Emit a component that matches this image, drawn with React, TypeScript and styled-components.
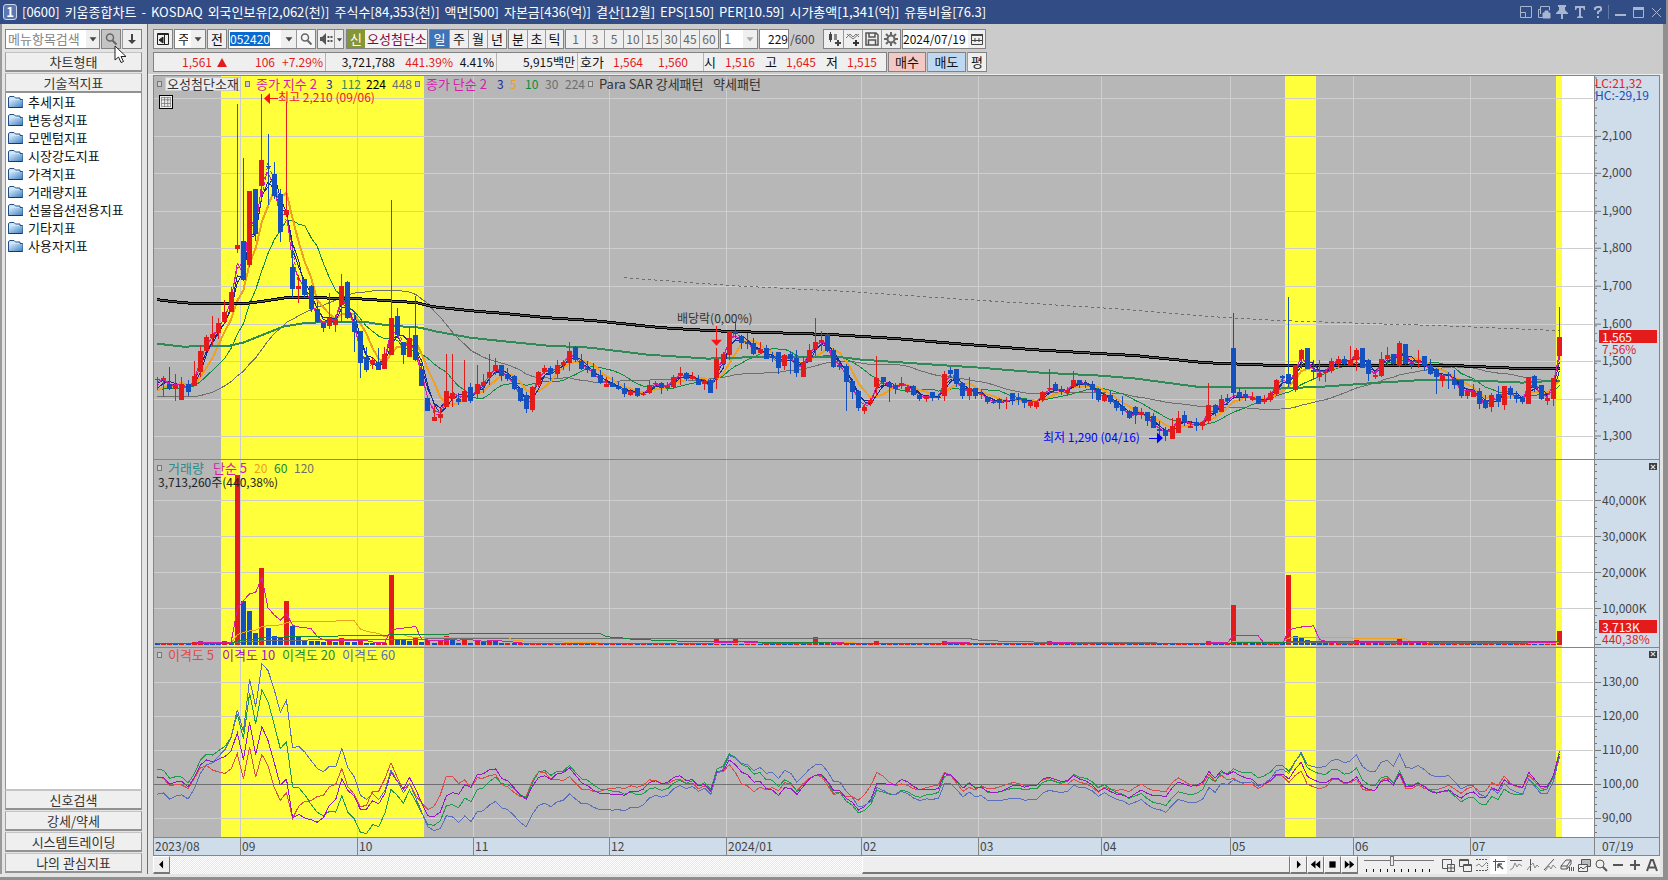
import React, { Fragment } from "react";
import styled, { createGlobalStyle, css } from "styled-components";

const RED = "#e31b1b";
const BLUE = "#1450be";
const MAGENTA = "#d61cab";
const NAVY = "#1a2b94";
const ORANGE = "#f0a020";
const GREEN = "#0f8a3c";
const GRAY = "#6e6e6e";
const TEAL = "#2e8b57";

/* ---------- data ---------- */

/* One candle per trading day: direction, high, body top, body bottom, low (plot units, 0.3756 units per won). */
const CANDLES = `
+377,379,380,390 +376,378,380,397 -367,384,389,390 +374,385,389,401 +377,384,400,400 -380,384,392,396
+361,376,386,386 +345,351,372,377 +335,337,351,351 +316,334,338,346 +318,323,333,339 +300,312,322,323
+287,292,312,312 +104,245,249,253 -158,241,280,281 +191,191,265,267 -189,189,234,241 +94,160,186,200
-134,166,167,205 -162,174,196,199 -189,194,232,242 +102,210,215,217 -250,267,289,298 +275,286,289,303
-279,279,295,297 -285,286,309,312 -302,309,322,323 -323,323,328,332 +293,318,326,329 +315,319,325,332
+274,286,305,322 -281,282,318,319 -311,322,332,352 -331,331,363,378 -347,357,370,372 +358,360,364,369
-348,362,370,370 +347,354,369,369 +200,318,355,355 -308,316,335,337 -342,342,355,364 +327,338,357,357
-296,335,360,361 -363,369,386,386 -398,398,411,411 +405,417,421,421 +408,414,418,423 +354,391,407,407
+354,393,399,407 -393,399,402,405 +360,391,402,402 -383,387,401,403 +365,384,394,398 +374,382,386,393
+354,372,377,385 +358,365,371,375 -365,365,376,381 -368,374,379,381 -375,376,389,390 -388,388,401,402
-392,395,409,413 +386,387,410,412 +371,372,385,387 +365,368,372,374 -366,368,374,381 +360,365,374,378
+360,362,365,370 +342,351,363,371 -346,347,360,362 -354,361,369,370 -361,368,370,373 -363,369,377,377
-370,375,383,384 +377,384,387,387 -377,383,387,387 -382,386,389,390 -383,388,394,397 +389,391,395,396
-388,388,396,397 +393,394,395,396 +380,385,393,394 +381,383,384,387 -382,383,388,394 +382,386,388,391
+375,377,387,389 +367,373,375,385 -372,373,379,381 +372,376,379,380 -375,379,385,385 +380,381,384,390
-379,380,393,393 +348,359,378,389 +352,354,364,367 +331,331,355,360 -322,331,334,338 -336,336,343,349
-333,342,344,349 -338,343,354,355 +342,349,353,354 -345,348,359,359 -352,356,358,362 -352,352,368,374
+354,355,366,370 -351,354,359,374 -350,358,373,377 +356,362,377,377 +344,350,362,362 +318,342,349,356
+331,340,342,351 -333,335,351,352 -348,350,367,368 -361,365,367,370 -364,366,382,411 -380,381,392,399
-390,391,408,411 +405,407,411,414 +398,400,403,406 +356,378,387,396 -377,377,382,385 -382,383,387,402
-383,385,389,394 +377,383,386,389 +385,387,392,393 -385,386,395,396 -394,395,399,401 +396,397,399,402
-392,392,398,401 -394,397,398,400 +371,374,396,401 -367,370,374,378 -369,369,384,387 -382,383,396,399
+377,388,396,400 -388,388,396,399 +390,394,395,399 -396,397,402,404 -399,402,403,404 -398,399,403,409
+397,401,402,409 -393,393,399,405 -393,398,399,405 -399,399,403,408 +401,402,406,408 +401,402,407,409
+391,392,400,402 +369,388,389,392 -382,384,390,391 -386,389,392,395 +387,390,393,395 +371,380,387,387
-380,380,384,388 -380,383,385,388 -381,384,390,399 -388,389,400,402 +393,395,401,402 -391,395,402,404
-399,401,408,411 -396,406,411,415 -410,411,418,419 -406,407,415,424 +408,412,415,419 -412,412,421,426
-413,416,428,428 -421,429,431,435 -427,430,436,441 +418,426,439,439 +411,418,433,433 -411,415,422,426
+421,426,428,428 -418,422,426,431 +421,422,426,430 +383,405,421,424 -404,405,413,416 +395,399,412,412
-394,398,401,405 -313,348,393,397 -388,392,397,401 -390,394,398,401 +392,397,400,401 -396,396,404,404
+395,400,402,404 +391,393,400,402 +379,380,394,396 -375,376,378,384 -297,374,384,387 +365,366,390,392
+349,350,359,369 -348,348,369,369 -360,370,372,379 +360,373,377,381 +369,371,373,382 +358,361,371,373
+356,359,364,367 -356,359,364,366 +346,360,365,366 +348,350,360,371 -348,348,368,368 -359,360,374,381
+372,375,377,379 +352,359,376,377 +347,355,359,365 -354,354,364,366 +341,343,366,367 -344,344,364,366
-361,363,365,369 +350,360,362,368 -356,356,366,371 -359,365,374,375 -368,369,377,394 +375,376,381,387
-372,374,375,389 -370,379,385,389 -380,380,396,398 +388,391,396,399 +384,391,397,397 -388,391,404,409
-395,400,408,409 +393,395,407,412 -386,394,402,407 +386,386,405,410 -386,388,395,399 -391,395,399,403
-396,398,402,404 +377,377,404,404 -375,376,388,392 -385,385,399,400 +396,398,401,405 +378,378,399,406
+307,337,356,360`
  .trim()
  .split(/\s+/)
  .map((token) => {
    const [high, top, bottom, low] = token.slice(1).split(",").map(Number);
    const up = token[0] === "+";
    return { up, high, top, bottom, low, close: up ? top : bottom };
  });

/* Volume bar heights of the days that stand out; the other days stay flat. */
const BUSY_DAYS: Record<number, number> = {
  6: 3, 7: 4, 8: 3, 11: 4, 12: 2, 13: 170, 14: 44, 15: 34, 16: 12, 17: 77, 18: 17, 19: 9, 20: 8, 21: 44,
  22: 19, 23: 9, 24: 5, 25: 4, 26: 4, 27: 3, 28: 5, 29: 3, 30: 7, 31: 3, 32: 3, 33: 5, 34: 2, 38: 70, 39: 6,
  40: 5, 41: 4, 42: 7, 43: 3, 44: 5, 46: 4, 47: 9, 48: 7, 49: 2, 50: 5, 51: 2, 52: 5, 53: 3, 54: 5, 55: 5,
  91: 6, 94: 6, 101: 3, 107: 8, 117: 4, 128: 4, 145: 4, 171: 4, 175: 40, 184: 70, 185: 9, 186: 7, 187: 5,
  188: 3, 195: 5, 202: 6, 213: 2, 223: 4, 227: 4, 228: 14,
};
const VOLUMES = CANDLES.map((_, i) => BUSY_DAYS[i] ?? 1 + ((i * 7) % 5) / 10);

const PLOT = { left: 154, width: 1440 };
const dayX = (i: number) => 157.3 + i * 6.15;
const priceOf = (y: number) => 1300 + (436.3 - y) / 0.3756;

type Point = [number, number];

const CLOSES = CANDLES.map((c) => c.close);
const HISTORY = [
  ...Array(30).fill(327), ...Array(10).fill(385), ...Array(10).fill(416), ...Array(5).fill(389), ...Array(5).fill(394),
] as number[];

const average = (values: number[], before: number[], span: number) => {
  const all = [...before, ...values];
  return values.map((_, i) => {
    const end = before.length + i + 1;
    const part = all.slice(Math.max(0, end - span), end);
    return part.reduce((a, b) => a + b, 0) / part.length;
  });
};
const exponential = (values: number[], span: number) => {
  const k = 2 / (span + 1);
  let last = 388;
  return values.map((v) => (last = v * k + last * (1 - k)));
};
const path = (points: Point[]) => points.map(([x, y], i) => `${i ? "L" : "M"}${x.toFixed(1)} ${y.toFixed(1)}`).join("");
const series = (values: number[]) => path(values.map((v, i) => [dayX(i), v]));

const EMA_224: Point[] = [
  [157, 300], [183, 303], [200, 304], [243, 304], [260, 302], [286, 298], [313, 298], [357, 299], [417, 303],
  [433, 307], [470, 311], [507, 314], [547, 318], [594, 321], [661, 328], [711, 331], [740, 332], [772, 333],
  [833, 335], [897, 339], [944, 343], [1033, 350], [1100, 354], [1136, 356], [1204, 363], [1252, 365],
  [1279, 366], [1399, 366], [1455, 366], [1522, 369], [1560, 369],
];
const EMA_112: Point[] = [
  [157, 344], [183, 347], [230, 346], [243, 343], [263, 335], [283, 327], [307, 323], [363, 322], [390, 326],
  [420, 328], [437, 332], [470, 338], [507, 342], [547, 346], [590, 348], [647, 355], [708, 359], [769, 357],
  [836, 357], [861, 360], [919, 364], [979, 368], [1040, 373], [1100, 376], [1136, 379], [1196, 387],
  [1237, 388], [1279, 389], [1324, 387], [1380, 383], [1429, 380], [1477, 381], [1522, 383], [1560, 381],
];
const SMA_224: Point[] = [
  [624, 278], [733, 286], [851, 292], [969, 300], [1100, 308], [1140, 311], [1226, 318], [1282, 321],
  [1372, 324], [1440, 326], [1560, 331],
];

const MONTHS: { x: number; label: string }[] = [
  { x: 240, label: "09" }, { x: 357, label: "10" }, { x: 473, label: "11" }, { x: 609, label: "12" },
  { x: 726, label: "2024/01" }, { x: 861, label: "02" }, { x: 978, label: "03" }, { x: 1101, label: "04" },
  { x: 1230, label: "05" }, { x: 1353, label: "06" }, { x: 1470, label: "07" },
];

const BANDS = [
  { x: 221, width: 203 },
  { x: 1285, width: 31 },
  { x: 1556, width: 6 },
];

/* ---------- shared ---------- */

const GlobalStyle = createGlobalStyle`
  * { box-sizing: border-box; }
  body { margin: 0; background: #8f8f8f; }
  body, button, input, select {
    font-family: "Noto Sans CJK KR", sans-serif;
    font-size: 13px;
    line-height: 14px;
    color: #222;
  }
  button, input, select { margin: 0; padding: 0; border-radius: 0; outline: none; }
  h1, p, ul { margin: 0; padding: 0; font-weight: normal; list-style: none; }
`;

const Window = styled.div`
  display: flex;
  flex-direction: column;
  min-width: 1200px;
  min-height: 100vh;
  background: #e4e4e4;
  border-right: 5px solid #8f908f;
`;

const TitleBar = styled.header`
  display: flex;
  align-items: center;
  flex: 0 0 24px;
  gap: 5px;
  padding: 0 3px;
  margin-right: -3px;
  background: #324d85;
  color: #fff;
`;
const WindowNumber = styled.span`
  width: 14px;
  height: 16px;
  border: 1px solid #cfd8ea;
  border-radius: 3px;
  background: #5b78b0;
  font-weight: bold;
  text-align: center;
`;
const Title = styled.h1`
  display: flex;
  flex: 1;
  gap: 5px;
  font-size: 13px;
  line-height: 16px;
  white-space: nowrap;
`;
const TitleTools = styled.div`
  display: flex;
  align-items: center;
  gap: 3px;
`;
const TitleButton = styled.button`
  display: flex;
  width: 15px;
  height: 16px;
  align-items: center;
  justify-content: center;
  border: 0;
  background: none;
  color: #a9b6d0;
`;
const TitleDivider = styled.i`
  width: 1px;
  height: 14px;
  background: #6378a0;
`;

const Body = styled.div`
  display: flex;
  flex: 1;
  padding-bottom: 3px;
  border-bottom: 3px solid #8f908f;
`;

/* ---------- sidebar ---------- */

const Sidebar = styled.aside`
  display: flex;
  flex-direction: column;
  flex: 0 0 148px;
  padding: 5px 5px 0 3px;
  border-left: 2px solid #9a9a9a;
  border-right: 1px solid #6e6e6e;
  background: #e4e4e4;
`;
const SearchRow = styled.form`
  display: flex;
  gap: 1px;
  height: 20px;
  margin-bottom: 3px;
`;
const Combo = styled.div<{ $width: number }>`
  display: flex;
  width: ${(p) => p.$width}px;
  height: 20px;
  border: 1px solid #828282;
  background: #fff;
`;
const TextInput = styled.input<{ $align?: string; $small?: boolean }>`
  flex: 1;
  min-width: 0;
  border: 0;
  padding: 0 ${(p) => (p.$small ? 0 : 2)}px;
  background: none;
  color: #111;
  font-size: ${(p) => (p.$small ? 12 : 13)}px;
  text-align: ${(p) => p.$align ?? "left"};
  &::placeholder { color: #858585; }
`;
const NativeSelect = styled.select<{ $off?: boolean }>`
  appearance: none;
  flex: 1;
  min-width: 0;
  border: 0;
  padding: 0 3px;
  background: none;
  color: ${(p) => (p.$off ? "#777" : "#111")};
`;
const SectionButton = styled.button`
  height: 20px;
  flex-shrink: 0;
  border: 1px solid;
  border-bottom-width: 2px;
  border-color: #c4c4c4 #929292 #929292 #a0a0a0;
  background: #efefef;
  color: #333;
  margin-bottom: 1px;
`;
const FolderList = styled.ul`
  flex: 1;
  margin-top: -1px;
  border: 1px solid #929292;
  border-top: 0;
  border-bottom-color: #c4c4c4;
  background: #fff;
`;
const FolderItem = styled.li`
  display: flex;
  align-items: center;
  gap: 5px;
  height: 18px;
  padding-left: 2px;
  color: #111;
`;

/* ---------- toolbar ---------- */

const Main = styled.main`
  display: flex;
  flex-direction: column;
  flex: 1;
  min-width: 0;
`;
const Toolbars = styled.div`
  display: flex;
  flex-direction: column;
  gap: 3px;
  padding: 5px 0 0 5px;
  height: 51px;
  background: #cbcbcb;
  border-bottom: 1px solid #eee;
`;
const ToolRow = styled.div`
  display: flex;
  height: 20px;
  gap: 1px;
`;
const Group = styled.div<{ $after?: number }>`
  display: flex;
  height: 20px;
  margin-right: ${(p) => p.$after ?? 0}px;
  border: 1px solid #828282;
  background: #fff;
`;
const ToolButton = styled.button<{ $width: number; $on?: boolean; $off?: boolean; $boxed?: boolean; $tone?: string; $divided?: boolean }>`
  display: flex;
  flex: 0 0 ${(p) => p.$width}px;
  min-width: 0;
  align-items: center;
  justify-content: center;
  border: ${(p) => (p.$boxed ? "1px solid #828282" : "0")};
  ${(p) => p.$divided && css`& + & { border-left: 1px solid #9a9a9a; }`}
  background: ${(p) => p.$tone ?? (p.$on ? "#3f74b8" : "#efefef")};
  color: ${(p) => (p.$on ? "#fff" : p.$off ? "#666" : "#111")};
  font-size: ${(p) => (p.$off ? 12 : 13)}px;
  svg { flex-shrink: 0; }
`;
const StockName = styled.span`
  display: block;
  width: 62px;
  padding-left: 2px;
  overflow: hidden;
  background: #f4f4f4;
  color: #7d0a3c;
  line-height: 17px;
  white-space: nowrap;
`;
const NewBadge = styled.span`
  width: 18px;
  background: #859636;
  color: #fff;
  line-height: 17px;
  text-align: center;
`;
const CodeInput = styled(TextInput)`
  flex: 0 0 51px;
  margin: 2px 0 2px 1px;
  background: linear-gradient(#0a6ad0, #0a6ad0) 0 0 / 40px 100% no-repeat;
  color: #fff;
`;
const Total = styled.span`
  width: 32px;
  color: #444;
  font-size: 12px;
  line-height: 20px;
`;
const QuoteBox = styled.div`
  display: flex;
  width: 734px;
  height: 20px;
  border: 1px solid #828282;
  background: #efefef;
`;
const Quote = styled.span<{ $width: number; $color?: string; $end?: boolean; $align?: string; $label?: boolean }>`
  flex: 0 0 ${(p) => p.$width}px;
  padding-right: 2px;
  border-right: ${(p) => (p.$end ? "1px solid #b4b4b4" : "0")};
  color: ${(p) => p.$color ?? "#111"};
  font-size: ${(p) => (p.$label ? 13 : 12)}px;
  line-height: 18px;
  text-align: ${(p) => p.$align ?? "right"};
  white-space: nowrap;
`;
const RiseMark = styled.i`
  display: inline-block;
  margin: 0 0 0 5px;
  border: 5px solid transparent;
  border-top: 0;
  border-bottom: 9px solid ${RED};
`;

/* ---------- chart ---------- */

const ChartFrame = styled.section`
  display: flex;
  flex-direction: column;
  flex: 1;
  margin: 0 3px 0 5px;
  border: 1px solid #858585;
`;
const Pane = styled.div<{ $grow: number }>`
  display: flex;
  flex: ${(p) => p.$grow} 1 0;
  border-bottom: 1px solid #858585;
`;
const Plot = styled.div`
  position: relative;
  flex: 1;
  min-width: 0;
  background: linear-gradient(to right, #b7b7b7 97.8%, #fff 97.8%);
`;
const Canvas = styled.svg`
  position: absolute;
  inset: 0;
  width: 100%;
  height: 100%;
  path { fill: none; vector-effect: non-scaling-stroke; shape-rendering: crispEdges; }
`;
const Scale = styled.div`
  position: relative;
  flex: 0 0 65px;
  border-left: 1px solid #858585;
  background: #cfdcea;
`;
const ScaleSvg = styled.svg`
  position: absolute;
  left: 0;
  top: 0;
  width: 8px;
  height: 100%;
`;
const SCALE_COLORS = { red: RED, blue: BLUE, plain: "#444" };
const ScaleLabel = styled.span<{ $tone?: "red" | "blue"; $wide?: boolean }>`
  position: absolute;
  left: ${(p) => (p.$wide ? 0 : 7)}px;
  margin-top: -7px;
  color: ${(p) => SCALE_COLORS[p.$tone ?? "plain"]};
  font-size: 12px;
  line-height: 12px;
`;
const ScaleFlag = styled.span`
  position: absolute;
  left: 4px;
  right: 2px;
  margin-top: -8px;
  padding-left: 3px;
  background: ${RED};
  color: #fff;
  font-size: 12px;
  line-height: 13px;
`;
const CloseButton = styled.button`
  position: absolute;
  right: 2px;
  top: 3px;
  width: 8px;
  height: 7px;
  border: 0;
  background: #3c3c3c;
  display: flex;
  align-items: center;
  justify-content: center;
`;
const Legend = styled.p`
  position: relative;
  display: flex;
  align-items: center;
  height: 15px;
  padding-left: 3px;
  white-space: pre;
`;
const LegendItem = styled.span<{ $color?: string; $width?: number; $boxed?: boolean; $number?: boolean }>`
  width: ${(p) => (p.$width ? `${p.$width}px` : "auto")};
  flex-shrink: 0;
  color: ${(p) => p.$color ?? "#333"};
  font-size: ${(p) => (p.$number ? 12 : 13)}px;
  ${(p) => p.$boxed && css`background: #ececec; border: 1px solid #ccc; text-align: center; line-height: 12px; margin-right: 4px;`}
`;
const Bullet = styled.i<{ $gap?: number }>`
  width: 5px;
  height: 6px;
  margin-right: ${(p) => p.$gap ?? 6}px;
  flex-shrink: 0;
  border: 1px solid #777;
  background: #ccc;
`;
const Note = styled.span<{ $color: string }>`
  position: absolute;
  display: flex;
  align-items: center;
  height: 14px;
  margin-top: -7px;
  color: ${(p) => p.$color};
  font-size: 12px;
  white-space: nowrap;
`;
const GridButton = styled.button`
  position: absolute;
  left: 5px;
  top: 19px;
  width: 14px;
  height: 14px;
  display: flex;
  align-items: center;
  justify-content: center;
  border: 1px solid #000;
  background: #eee;
`;
const DateAxis = styled.div`
  display: flex;
  flex: 0 0 17px;
  background: #cfdcea;
  color: #444;
  font-size: 12px;
`;
const DateTrack = styled.div`
  position: relative;
  flex: 1;
`;
const DateLabel = styled.span<{ $ruled?: boolean }>`
  position: absolute;
  top: 0;
  height: 17px;
  padding-left: 1px;
  border-left: ${(p) => (p.$ruled ? "1px solid #858585" : "0")};
  line-height: 16px;
`;
const LastDate = styled.span`
  flex: 0 0 65px;
  padding-left: 7px;
  border-left: 1px solid #858585;
  line-height: 16px;
`;

/* ---------- bottom bar ---------- */

const BottomBar = styled.footer`
  display: flex;
  height: 18px;
  margin: 0 3px 0 5px;
  background: #efefef;
`;
const ScrollTrack = styled.div`
  display: flex;
  flex: 1;
  justify-content: flex-end;
  background: repeating-conic-gradient(#e6e6e6 0 25%, #fff 0 50%) 0 0 / 2px 2px;
`;
const ScrollThumb = styled.div`
  width: 38.2%;
  border: 1px solid #fff;
  border-right-color: #777;
  border-bottom: 2px solid #777;
  background: #eee;
`;
const PlayButton = styled.button`
  display: flex;
  flex: 0 0 17px;
  align-items: center;
  justify-content: center;
  border: 1px solid #fff;
  border-right-color: #777;
  border-bottom: 2px solid #777;
  background: #eee;
`;
const ZoomSlider = styled.input`
  appearance: none;
  width: 70px;
  height: 16px;
  margin: 0 5px 0 6px;
  background:
    repeating-linear-gradient(to right, #111 0 1px, transparent 1px 7px) 2px 13px / 67px 3px no-repeat,
    linear-gradient(#777, #777) 0 4px / 100% 1px no-repeat;
  &::-webkit-slider-thumb {
    appearance: none;
    width: 4px;
    height: 10px;
    margin-top: -6px;
    border: 1px solid #777;
    background: #eee;
  }
`;
const IconButton = styled.button<{ $on?: boolean }>`
  display: flex;
  flex: 0 0 17px;
  align-items: center;
  justify-content: center;
  border: 0;
  background: ${(p) => (p.$on ? "#fff" : "none")};
`;

/* ---------- icons ---------- */

const Icon = ({ d, size = 14, color = "currentColor", fill, width = 1, children }: {
  d?: string; size?: number; color?: string; fill?: boolean; width?: number; children?: React.ReactNode;
}) => (
  <svg width={size} height={size} viewBox="0 0 14 14" fill="none" stroke={color} strokeWidth={width} aria-hidden="true">
    {d && <path d={d} fill={fill ? color : "none"} stroke={fill ? "none" : color} />}
    {children}
  </svg>
);
const Caret = ({ faded, size = 12 }: { faded?: boolean; size?: number }) => (
  <Icon size={size} d="M3 5h8l-4 5z" fill color={faded ? "#aaa" : "#444"} />
);
const Lens = () => <Icon color="#666" width={2}><circle cx="6" cy="5.5" r="3.5" strokeWidth="1.5" /><path d="M8.5 8.5l4 4" /></Icon>;

const Folder = () => (
  <svg width="15" height="14" viewBox="0 0 15 14" aria-hidden="true">
    <defs>
      <linearGradient id="folder" x1="0" y1="0" x2="1" y2="1">
        <stop offset="0" stopColor="#d6ebfc" />
        <stop offset="1" stopColor="#3f7fc0" />
      </linearGradient>
    </defs>
    <path d="M.5 12.5V2.500L2 1.500h4L7.500 3H12v1.500h2.500v8z" fill="#cfe6fa" stroke="#1d4f86" />
    <path d="M1 5h13.500v7.500H1z" fill="url(#folder)" />
    <path d="M.5 12.500h14" stroke="#123a6b" />
  </svg>
);

const CHART_TOOLS: { name: string; on?: boolean; art: React.ReactNode }[] = [
  { name: "창 추가", art: <><path d="M1.500 1.500h9v9h-9z" /><path d="M6.500 6.500h7v7h-7zM10 6.500v7M6.500 10h7" fill="#efefef" /></> },
  { name: "창 복사", art: <><path d="M1.500 1.500h9v7h-9zM1.500 2.500h9" /><path d="M5.500 6.500h8v7h-8zM5.500 7.500h8" fill="#efefef" /></> },
  { name: "구간 보기", art: <><path d="M1 1.500h12M1 12.500h12" strokeDasharray="2 1" /><path d="M1 8l3-2 3 3 5-5" stroke="#888" /><path d="M12.500 5v8" strokeDasharray="1 1" /></> },
  { name: "십자선", on: true, art: <><path d="M1 3.500h12M3.500 1v12" stroke="#555" /><path d="M6 6l5 5M6 6h4M6 6v4" strokeWidth="1.5" /></> },
  { name: "수평선", art: <><path d="M1 2.500h12" /><path d="M1 12l3-2 2-5 2 4 2-3 3 2" stroke="#888" /></> },
  { name: "수직선", art: <><path d="M4.500 1v12" /><path d="M1 12l3-4 3-3 2 5 2-3 2 2" stroke="#888" /></> },
  { name: "추세선", art: <><path d="M1 12L11 1" /><path d="M2 13l4-5 2 3 2-4 3 3" stroke="#888" /></> },
  { name: "지우기", art: <><path d="M1 8l5-6h5L7 8v3H1zM1 8h6M7 11l4-5V2" /><path d="M9.500 9v4M11.500 9v4M13.500 9v4" /></> },
  { name: "차트 겹치기", art: <><path d="M4.500 1.500h9v7h-9z" fill="#bbb" /><path d="M1.500 6.500h9v7h-9z" fill="#efefef" /><path d="M2 11l2-2 2 2 4-3" /></> },
  { name: "확대경", art: <><circle cx="6" cy="6" r="4" /><path d="M9 9l4 4" strokeWidth="2" /></> },
  { name: "축소", art: <path d="M2 7h10" strokeWidth="2" /> },
  { name: "확대", art: <path d="M2 7h10M7 2v10" strokeWidth="2" /> },
  { name: "글자", art: <path d="M2 13L6 2h2l4 11M4 9.500h6" strokeWidth="2" /> },
];

/* ---------- plot pieces ---------- */

const Backdrop = ({ top, height, lines }: { top: number; height: number; lines: number[] }) => (
  <>
    {BANDS.map((b) => <rect key={b.x} x={b.x} y={top} width={b.width} height={height} fill="#ffff3c" />)}
    {MONTHS.map((m) => <path key={m.x} d={`M${m.x + 0.5} ${top}v${height}`} stroke="#cecece" />)}
    {lines.map((y) => <path key={y} d={`M154 ${y + 0.5}h1439`} stroke="#cecece" />)}
  </>
);

const PlotSvg = ({ top, height, lines, children }: { top: number; height: number; lines: number[]; children: React.ReactNode }) => (
  <Canvas viewBox={`${PLOT.left} ${top} ${PLOT.width} ${height}`} preserveAspectRatio="none" aria-hidden="true">
    <Backdrop top={top} height={height} lines={lines} />
    {children}
  </Canvas>
);

const AxisTicks = ({ top, height, first, step, majors }: { top: number; height: number; first: number; step: number; majors: number[] }) => {
  const minor: number[] = [];
  for (let y = first; y < top + height; y += step) minor.push(y);
  return (
    <ScaleSvg viewBox={`0 ${top} 8 ${height}`} preserveAspectRatio="none" shapeRendering="crispEdges" aria-hidden="true">
      {minor.map((y) => <path key={y} d={`M0 ${y}h2`} stroke="#777" />)}
      {majors.map((y) => <path key={y} d={`M0 ${y + 0.5}h6`} stroke="#777" />)}
    </ScaleSvg>
  );
};

const at = (x: number, y: number, top: number, height: number) => ({
  left: `${((x - PLOT.left) / PLOT.width) * 100}%`,
  top: `${((y - top) / height) * 100}%`,
});
const down = (y: number, top: number, height: number) => ({ top: `${((y - top) / height) * 100}%` });

const PRICE = { top: 76, height: 384 };
const VOLUME = { top: 461, height: 186 };
const GAP = { top: 648, height: 189 };

const PRICE_LINES = [98, 136, 173, 211, 248, 286, 324, 361, 399, 436];
const PRICE_LABELS = ["2,100", "2,000", "1,900", "1,800", "1,700", "1,600", "1,500", "1,400", "1,300"];
const VOLUME_LINES = [501, 537, 573, 609];
const VOLUME_LABELS = ["40,000K", "30,000K", "20,000K", "10,000K"];
const GAP_LINES = [682, 716, 750, 818];

const PricePane = () => (
  <Pane $grow={385}>
    <Plot>
      <PlotSvg {...PRICE} lines={PRICE_LINES}>
        <path d={series(average(CLOSES, HISTORY, 30))} stroke={GRAY} />
        <path d={series(average(CLOSES, HISTORY, 10))} stroke={GREEN} />
        <path d={series(average(CLOSES, HISTORY, 5))} stroke={ORANGE} strokeWidth={2} />
        <path d={path(EMA_112)} stroke={TEAL} strokeWidth={2} />
        <path d={path(EMA_224)} stroke="#000" strokeWidth={3} />
        <path d={path(EMA_224)} stroke="#555" strokeWidth={1} />
        <path d={path(SMA_224)} stroke={GRAY} strokeDasharray="3 3" />
        <path d={series(exponential(CLOSES, 3))} stroke={NAVY} />
        <path d={series(average(CLOSES, HISTORY, 3))} stroke={NAVY} />
        <path d={series(exponential(CLOSES, 2))} stroke={MAGENTA} />
        <path d={series(average(CLOSES, HISTORY, 2))} stroke={MAGENTA} strokeDasharray="3 2" />
        <g shapeRendering="crispEdges">
          {CANDLES.map((c, i) => {
            const x = Math.floor(dayX(i));
            const color = c.up ? RED : BLUE;
            return (
              <Fragment key={i}>
                <rect x={x} y={c.high} width={1} height={c.low - c.high} fill={color} />
                <rect x={x - 2} y={c.top} width={5} height={Math.max(1, c.bottom - c.top)} fill={color} />
              </Fragment>
            );
          })}
          <rect x={716} y={326} width={1} height={16} fill="#f11" />
          <rect x={1149} y={438} width={10} height={1} fill="#00f" />
          <rect x={269} y={98} width={9} height={1} fill="#f11" />
        </g>
        <polygon points="711,340 722,340 716.5,346" fill="#f11" />
        <polygon points="1157,433 1157,444 1163,438.5" fill="#00f" />
        <polygon points="270,93 270,104 264,98.5" fill="#f11" />
      </PlotSvg>
      <Legend>
        <Bullet $gap={3} />
        <LegendItem $boxed $width={76}>오성첨단소재</LegendItem>
        <Bullet />
        <LegendItem $color={MAGENTA} $width={70}>종가 지수 2</LegendItem>
        <LegendItem $number $color={NAVY} $width={15}>3</LegendItem>
        <LegendItem $number $color={TEAL} $width={25}>112</LegendItem>
        <LegendItem $number $color="#000" $width={26}>224</LegendItem>
        <LegendItem $number $color={GRAY} $width={23}>448</LegendItem>
        <Bullet />
        <LegendItem $color={MAGENTA} $width={71}>종가 단순 2</LegendItem>
        <LegendItem $number $color={NAVY} $width={13}>3</LegendItem>
        <LegendItem $number $color={ORANGE} $width={15}>5</LegendItem>
        <LegendItem $number $color={GREEN} $width={20}>10</LegendItem>
        <LegendItem $number $color={GRAY} $width={20}>30</LegendItem>
        <LegendItem $number $color={GRAY} $width={23}>224</LegendItem>
        <Bullet />
        <LegendItem $width={114}>Para SAR 강세패턴</LegendItem>
        <LegendItem>약세패턴</LegendItem>
      </Legend>
      <GridButton type="button" aria-label="표 보기">
        <Icon size={10} color="#666" d="M.5 .5h13v13H.5zM.5 4h13M.5 9h13M5 .5v13M9.500 .5v13" />
      </GridButton>
      <Note $color="#f11" style={at(278, 97, 76, 384)}>최고 2,210 (09/06)</Note>
      <Note $color="#333" style={at(677, 318, 76, 384)}>배당락(0,00%)</Note>
      <Note $color="#00f" style={at(1043, 437, 76, 384)}>최저 1,290 (04/16)</Note>
    </Plot>
    <Scale>
      <AxisTicks {...PRICE} first={78} step={7.52} majors={PRICE_LINES.slice(1)} />
      <ScaleLabel $tone="red" $wide style={down(84, 76, 384)}>LC:21,32</ScaleLabel>
      <ScaleLabel $tone="blue" $wide style={down(96, 76, 384)}>HC:-29,19</ScaleLabel>
      {PRICE_LABELS.map((label, i) => (
        <ScaleLabel key={label} style={down(PRICE_LINES[i + 1], 76, 384)}>{label}</ScaleLabel>
      ))}
      <ScaleLabel $tone="red" style={down(350, 76, 384)}>7,56%</ScaleLabel>
      <ScaleFlag style={down(338, 76, 384)}>1,565</ScaleFlag>
    </Scale>
  </Pane>
);

const volumeLine = (span: number) => series(average(VOLUMES, Array(120).fill(1), span).map((v) => 645.5 - v));

const VolumePane = () => (
  <Pane $grow={187}>
    <Plot>
      <PlotSvg {...VOLUME} lines={VOLUME_LINES}>
        <g shapeRendering="crispEdges">
          {VOLUMES.map((v, i) => {
            const height = Math.max(2, v);
            const rising = i > 0 && v > VOLUMES[i - 1];
            return <rect key={i} x={Math.floor(dayX(i)) - 2} y={646 - height} width={5} height={height} fill={rising ? RED : BLUE} />;
          })}
        </g>
        <path d={volumeLine(120)} stroke={GRAY} />
        <path d={volumeLine(20)} stroke={ORANGE} />
        <path d={volumeLine(5)} stroke={MAGENTA} />
        <path d={volumeLine(60)} stroke={GREEN} />
      </PlotSvg>
      <Legend>
        <Bullet />
        <LegendItem $color="#2e8b8b" $width={45}>거래량</LegendItem>
        <LegendItem $color={MAGENTA} $width={41}>단순 5</LegendItem>
        <LegendItem $number $color={ORANGE} $width={20}>20</LegendItem>
        <LegendItem $number $color={GREEN} $width={20}>60</LegendItem>
        <LegendItem $number $color={GRAY}>120</LegendItem>
      </Legend>
      <Note $color="#222" style={at(158, 482, 461, 186)}>3,713,260주(440,38%)</Note>
    </Plot>
    <Scale>
      <AxisTicks {...VOLUME} first={465} step={7.2} majors={[...VOLUME_LINES, 645]} />
      {VOLUME_LABELS.map((label, i) => (
        <ScaleLabel key={label} style={down(VOLUME_LINES[i], 461, 186)}>{label}</ScaleLabel>
      ))}
      <ScaleLabel $tone="red" style={down(640, 461, 186)}>440,38%</ScaleLabel>
      <ScaleFlag style={down(628, 461, 186)}>3,713K</ScaleFlag>
      <CloseButton type="button" aria-label="거래량 닫기"><Icon size={6} width={3} color="#ddd" d="M2 2l10 10M12 2L2 12" /></CloseButton>
    </Scale>
  </Pane>
);

const PRICES = CLOSES.map(priceOf);
const gapLine = (span: number) => {
  const mean = average(PRICES, HISTORY.map(priceOf), span);
  return series(PRICES.map((p, i) => 784.3 - ((p / mean[i]) * 100 - 100) * 3.4));
};

const GapPane = () => (
  <Pane $grow={190}>
    <Plot>
      <PlotSvg {...GAP} lines={GAP_LINES}>
        <path d="M154 784.5h1439" stroke="#707070" />
        <path d={gapLine(5)} stroke="#dc4b4b" />
        <path d={gapLine(20)} stroke="#1b9c4c" />
        <path d={gapLine(10)} stroke="#9a17c8" />
        <path d={gapLine(60)} stroke="#5a6ebe" />
      </PlotSvg>
      <Legend>
        <Bullet />
        <LegendItem $color="#dc4b4b" $width={54}>이격도 5</LegendItem>
        <LegendItem $color="#9a17c8" $width={60}>이격도 10</LegendItem>
        <LegendItem $color="#1b8c3c" $width={60}>이격도 20</LegendItem>
        <LegendItem $color="#5a6ebe">이격도 60</LegendItem>
      </Legend>
    </Plot>
    <Scale>
      <AxisTicks {...GAP} first={655} step={6.8} majors={[...GAP_LINES, 784]} />
      {["130,00", "120,00", "110,00", "100,00", "90,00"].map((label, i) => (
        <ScaleLabel key={label} style={down(682 + i * 34, 648, 189)}>{label}</ScaleLabel>
      ))}
      <CloseButton type="button" aria-label="이격도 닫기"><Icon size={6} width={3} color="#ddd" d="M2 2l10 10M12 2L2 12" /></CloseButton>
    </Scale>
  </Pane>
);

/* ---------- page ---------- */

const TITLE_PARTS = [
  "[0600]", "키움종합차트", "-", "KOSDAQ", "외국인보유[2,062(천)]", "주식수[84,353(천)]", "액면[500]", "자본금[436(억)]",
  "결산[12월]", "EPS[150]", "PER[10.59]", "시가총액[1,341(억)]", "유통비율[76.3]",
];
const FOLDERS = ["추세지표", "변동성지표", "모멘텀지표", "시장강도지표", "가격지표", "거래량지표", "선물옵션전용지표", "기타지표", "사용자지표"];
const PANELS = ["신호검색", "강세/약세", "시스템트레이딩", "나의 관심지표"];

const PointerArt = styled.svg`
  position: absolute;
  left: 114px;
  top: 45px;
`;

export default function App() {
  return (
    <Window>
      <GlobalStyle />
      <TitleBar>
        <WindowNumber>1</WindowNumber>
        <Title>{TITLE_PARTS.map((part) => <span key={part}>{part}</span>)}</Title>
        <TitleTools>
          <TitleButton aria-label="화면 분할"><Icon d="M1.500 1.500h11v11h-11zM1.500 7.500h5v5" /></TitleButton>
          <TitleButton aria-label="화면 잠금"><Icon><path d="M3.500 9V1.500h9v4M3 4.500H1.500v8H6" /><path d="M6 8h7v5H6zM8 8V6h3v2z" fill="currentColor" /></Icon></TitleButton>
          <TitleButton aria-label="고정"><Icon d="M3 0h8v2h-1v3l3 3v1H8v5H6V9H1V8l3-3V2H3z" fill /></TitleButton>
          <TitleButton aria-label="글꼴"><Icon d="M2 1h10v4h-1L10 3H8v8l2 1v1H4v-1l2-1V3H4L3 5H2z" fill /></TitleButton>
          <TitleButton aria-label="도움말"><Icon d="M4 5V3l2-1h3l1 1v2L7 7v2M7 11v2" width={2} /></TitleButton>
          <TitleDivider />
          <TitleButton aria-label="최소화"><Icon d="M2 9h11v2H2z" fill /></TitleButton>
          <TitleButton aria-label="최대화"><Icon><path d="M2.500 2.500h10v10h-10z" /><path d="M2 3.500h11" strokeWidth="3" /></Icon></TitleButton>
          <TitleButton aria-label="닫기"><Icon d="M3 3l9 9M12 3l-9 9" /></TitleButton>
        </TitleTools>
      </TitleBar>

      <Body>
        <Sidebar>
          <SearchRow onSubmit={(e) => e.preventDefault()}>
            <Combo $width={95}>
              <TextInput placeholder="메뉴항목검색" aria-label="메뉴항목검색" />
              <ToolButton type="button" $width={13} aria-label="검색 기록"><Caret /></ToolButton>
            </Combo>
            <ToolButton $width={20} $boxed $tone="#c4c4c4" aria-label="검색"><Lens /></ToolButton>
            <ToolButton type="button" $width={20} $boxed aria-label="아래로"><Icon color="#444" width={2}><path d="M7 2v7" /><path d="M3 8h8l-4 4z" fill="#444" stroke="none" /></Icon></ToolButton>
          </SearchRow>
          <SectionButton type="button">차트형태</SectionButton>
          <SectionButton type="button">기술적지표</SectionButton>
          <FolderList>
            {FOLDERS.map((name) => <FolderItem key={name}><Folder />{name}</FolderItem>)}
          </FolderList>
          {PANELS.map((name) => <SectionButton key={name} type="button">{name}</SectionButton>)}
        </Sidebar>

        <Main>
          <Toolbars>
            <ToolRow>
              <ToolButton $width={20} $boxed aria-label="패널 접기"><Icon color="#222"><path d="M1.500 1.500h11v11h-11zM2 2.500h10" /><path d="M3 8l4-3v6z" fill="#222" /><path d="M8.500 3v10" /></Icon></ToolButton>
              <Combo $width={32}>
                <NativeSelect aria-label="종류"><option>주</option></NativeSelect>
                <ToolButton $width={14} aria-label="종류 열기"><Caret /></ToolButton>
              </Combo>
              <ToolButton $width={20} $boxed>전</ToolButton>
              <Group>
                <CodeInput $small defaultValue="052420" aria-label="종목코드" />
                <ToolButton $width={15} aria-label="최근 종목"><Caret /></ToolButton>
                <ToolButton $width={19} $tone="#f6f6f6" aria-label="종목 검색"><Lens /></ToolButton>
              </Group>
              <Group $after={1}>
                <ToolButton $width={16} aria-label="소리"><Icon color="#555"><path d="M1 5h2l4-4v12L3 9H1z" fill="#555" stroke="none" /><path d="M9.500 4v6M12.500 4v6" strokeDasharray="2 2" strokeWidth="2" /></Icon></ToolButton>
                <ToolButton $width={9} aria-label="소리 설정"><Caret size={9} /></ToolButton>
              </Group>
              <Group>
                <NewBadge>신</NewBadge>
                <StockName>오성첨단소재</StockName>
              </Group>
              <Group>
                {["일", "주", "월", "년"].map((t, i) => <ToolButton key={t} $divided $width={19} $on={i === 0}>{t}</ToolButton>)}
              </Group>
              <Group>
                {["분", "초", "틱"].map((t) => <ToolButton key={t} $divided $width={18}>{t}</ToolButton>)}
              </Group>
              <Group>
                {["1", "3", "5", "10", "15", "30", "45", "60"].map((t) => <ToolButton key={t} $divided $off $width={19}>{t}</ToolButton>)}
              </Group>
              <Combo $width={38}>
                <NativeSelect $off aria-label="간격"><option>1</option></NativeSelect>
                <ToolButton $width={14} aria-label="간격 열기"><Caret faded /></ToolButton>
              </Combo>
              <Combo $width={30}><TextInput $small defaultValue="229" $align="right" aria-label="봉 수" /></Combo>
              <Total>/600</Total>
              <Group>
                <ToolButton $divided $width={19} aria-label="봉 추가"><Icon color="#444"><path d="M2 2h3v6H2zM3 0h1v10H3z" fill="#444" stroke="none" /><path d="M7 2h3v6H7z" fill="#888" stroke="none" /><path d="M11 8v6M8 11h6" strokeWidth="2" /></Icon></ToolButton>
                <ToolButton $divided $width={19} aria-label="지표 추가"><Icon color="#777"><path d="M0 6l4-4 3 3 3-3 3 3M1 2l6 5 6-5" /><path d="M10 8v6M7 11h6" stroke="#333" strokeWidth="2" /></Icon></ToolButton>
                <ToolButton $divided $width={19} aria-label="저장"><Icon color="#555" width={1.5} d="M1 1h10l2 2v10H1zM4 1v4h6V1M3.500 13V8h7v5" /></ToolButton>
                <ToolButton $divided $width={19} aria-label="설정"><Icon color="#666" width={2}><circle cx="7" cy="7" r="3.5" /><path d="M7 0v3M7 11v3M0 7h3M11 7h3M2 2l2 2M10 10l2 2M12 2l-2 2M2 12l2-2" /></Icon></ToolButton>
              </Group>
              <Combo $width={84}>
                <TextInput $small defaultValue="2024/07/19" aria-label="날짜" />
                <ToolButton $width={17} aria-label="달력"><Icon color="#444" d="M1.500 2.500h11v10h-11zM1 3.500h12M1 2.500h12M5 6v4M9 6v4M2 8.500h10" /></ToolButton>
              </Combo>
            </ToolRow>
            <ToolRow>
              <QuoteBox>
                <Quote $width={75} $color={RED}>1,561<RiseMark /></Quote>
                <Quote $width={48} $color={RED}>106</Quote>
                <Quote $width={49} $color={RED} $end>+7.29%</Quote>
                <Quote $width={71}>3,721,788</Quote>
                <Quote $width={58} $color={RED}>441.39%</Quote>
                <Quote $width={42} $end>4.41%</Quote>
                <Quote $width={81} $end>5,915백만</Quote>
                <Quote $width={28} $label>호가</Quote>
                <Quote $width={39} $color={RED}>1,564</Quote>
                <Quote $width={59} $color={RED} $end $align="center">1,560</Quote>
                <Quote $width={13} $label>시</Quote>
                <Quote $width={39} $color={RED}>1,516</Quote>
                <Quote $width={22} $label>고</Quote>
                <Quote $width={39} $color={RED}>1,645</Quote>
                <Quote $width={22} $label>저</Quote>
                <Quote $width={39} $color={RED}>1,515</Quote>
              </QuoteBox>
              <ToolButton $width={38} $boxed $tone="#f3c9c5">매수</ToolButton>
              <ToolButton $width={39} $boxed $tone="#bfd8f2">매도</ToolButton>
              <ToolButton $width={20} $boxed>평</ToolButton>
            </ToolRow>
          </Toolbars>

          <ChartFrame>
            <PricePane />
            <VolumePane />
            <GapPane />
            <DateAxis>
              <DateTrack>
                <DateLabel>2023/08</DateLabel>
                {MONTHS.map((m) => (
                  <DateLabel key={m.x} $ruled style={{ left: `${((m.x - PLOT.left) / PLOT.width) * 100}%` }}>{m.label}</DateLabel>
                ))}
              </DateTrack>
              <LastDate>07/19</LastDate>
            </DateAxis>
          </ChartFrame>

          <BottomBar>
            <PlayButton aria-label="왼쪽"><Icon size={11} color="#000" fill d="M9 2v10L4 7z" /></PlayButton>
            <ScrollTrack><ScrollThumb /></ScrollTrack>
            <PlayButton aria-label="오른쪽"><Icon size={11} color="#000" fill d="M5 2v10l5-5z" /></PlayButton>
            <PlayButton aria-label="뒤로"><Icon size={11} color="#000" fill d="M7 2v10L1 7zM13 2v10L7 7z" /></PlayButton>
            <PlayButton aria-label="정지"><Icon size={11} color="#000" fill d="M3 3h8v8H3z" /></PlayButton>
            <PlayButton aria-label="앞으로"><Icon size={11} color="#000" fill d="M1 2v10l6-5zM7 2v10l6-5z" /></PlayButton>
            <ZoomSlider type="range" min={0} max={100} defaultValue={40} aria-label="확대 비율" />
            {CHART_TOOLS.map((tool) => (
              <IconButton key={tool.name} $on={tool.on} aria-label={tool.name}><Icon color="#555">{tool.art}</Icon></IconButton>
            ))}
          </BottomBar>
        </Main>
      </Body>
      <PointerArt width="13" height="19" viewBox="0 0 13 19" aria-hidden="true">
        <path d="M1 1v14l3.500-3L7 17.500l2.500-1L7 11.500h5z" fill="#fff" stroke="#222" />
      </PointerArt>
    </Window>
  );
}
